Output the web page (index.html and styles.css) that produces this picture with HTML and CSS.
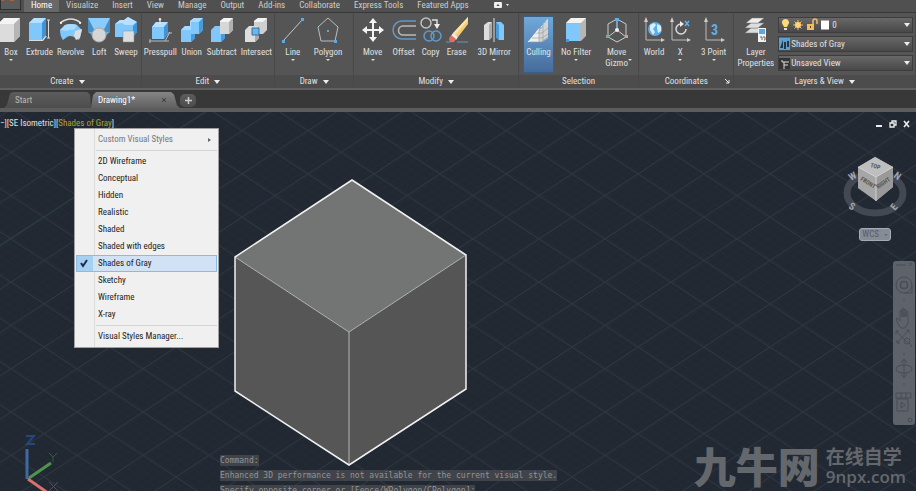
FILE: index.html
```html
<!DOCTYPE html>
<html lang="en">
  <head>
    <meta charset="UTF-8" />
    <meta name="viewport" content="width=device-width, initial-scale=1.0" />
    <title>Drawing1</title>
    <link rel="stylesheet" href="styles.css">
  </head>
  <body>
    <div class="app">
      <nav class="menu-tabs">
        <button class="app-button" aria-label="Application menu">
          <svg width="20" height="9" viewBox="0 0 20 9"><path d="M0 0h3v1H0zM9 0h4v1H9z" fill="#b0603c"/></svg>
        </button>
        <button class="menu-tab current">Home</button>
        <button class="menu-tab">Visualize</button>
        <button class="menu-tab">Insert</button>
        <button class="menu-tab">View</button>
        <button class="menu-tab">Manage</button>
        <button class="menu-tab">Output</button>
        <button class="menu-tab">Add-ins</button>
        <button class="menu-tab">Collaborate</button>
        <button class="menu-tab">Express Tools</button>
        <button class="menu-tab">Featured Apps</button>
        <button class="menu-tab ribbon-toggle" aria-label="Minimize ribbon">
          <svg width="18" height="8" viewBox="0 0 18 8"><rect x="1" y="1" width="8" height="6" rx="1" fill="#eee"/><path d="M3.500 5l1.500-2 1.500 2z" fill="#444"/><path d="M13 3h3l-1.500 2z" fill="#eee"/></svg>
        </button>
      </nav>

      <div class="ribbon">
        <section class="panel create">
          <div class="tools">
            <button class="tool">
              <svg width="22" height="26" viewBox="0 0 22 26"><path d="M-2 7l6-6h16v18l-6 6H-2z" fill="#dcdcdc"/><path d="M-2 7l6-6h16l-6 6z" fill="#f4f4f4"/><path d="M14 7l6-6v18l-6 6z" fill="#b5b5b5"/></svg>
              <span>Box</span><i class="caret"></i>
            </button>
            <button class="tool">
              <svg width="22" height="26" viewBox="0 0 22 26"><path d="M1 20v4h14l4-5" fill="#ddd"/><path d="M1 6l5-5h12v17l-4 5H1z" fill="#80c7fb"/><path d="M1 6l5-5h12l-4 5z" fill="#b7e0ff"/><path d="M14 6l4-5v17l-4 5z" fill="#3d95d8"/><path d="M20.500 3v18M19 3h3M19 21h3" stroke="#ddd"/></svg>
              <span>Extrude</span>
            </button>
            <button class="tool">
              <svg width="24" height="26" viewBox="0 0 24 26"><path d="M1 6Q12-2 22 6" fill="none" stroke="#ddd" stroke-width="1.500"/><path d="M1 13l5-5q6-2 12 0l5 5-3 10-5-3q-4-2-7 0l-4 3q-3-4-3-10z" fill="#80c7fb"/><path d="M1 13l5-5q6-2 12 0l-3 5q-4-1-7 1z" fill="#a9daff"/><path d="M16 14l7-2-2 9-4 2-2-4z" fill="#ddd"/><circle cx="2" cy="6" r="1" fill="#fff"/><circle cx="21" cy="6" r="1" fill="#fff"/></svg>
              <span>Revolve</span>
            </button>
            <button class="tool">
              <svg width="22" height="26" viewBox="0 0 22 26"><path d="M0 1h22v14l-7 6H8l-8-6z" fill="#64afe5"/><path d="M0 1h22l-6 11H6z" fill="#8dccfa"/><path d="M0 1l7 14-7 0zM22 1l-7 14h7z" fill="#488fc5"/><circle cx="11" cy="18" r="7" fill="#d5d5d5" stroke="#aaa"/></svg>
              <span>Loft</span>
            </button>
            <button class="tool">
              <svg width="22" height="26" viewBox="0 0 22 26"><path d="M0 7l5-4h4l4-3 9 5v10l-4 5H0z" fill="#80c7fb"/><path d="M0 7l5-4h4l4-3 9 5-5 3h-7l-3-2z" fill="#b7e0ff"/><path d="M18 9l4-4v10l-4 5z" fill="#3d95d8"/><path d="M8 14h11v11H8z" fill="#ddd" stroke="#888" stroke-width=".5"/></svg>
              <span>Sweep</span>
            </button>
          </div>
          <h2>Create <i class="drop"></i></h2>
        </section>

        <section class="panel edit">
          <div class="tools">
            <button class="tool">
              <svg width="24" height="26" viewBox="0 0 24 26"><path d="M1 24h20M17 24l5-9M2 22v4M19 16h5" stroke="#bbb" fill="none"/><path d="M4 10l4-5h12v12l-4 5H4z" fill="#80c7fb"/><path d="M4 10l4-5h12l-4 5z" fill="#b7e0ff"/><path d="M16 10l4-5v12l-4 5z" fill="#3d95d8"/><path d="M12 7V2M11 3l1-2 1 2z" stroke="#eee" fill="#eee"/></svg>
              <span>Presspull</span>
            </button>
            <button class="tool">
              <svg width="22" height="26" viewBox="0 0 22 26"><path d="M0 13l4-4h5V4l4-3h9v12l-4 4h-4v4l-4 4H0z" fill="#80c7fb"/><path d="M0 13l4-4h5V4l4-3h9l-4 4H10v8z" fill="#a9daff"/><path d="M18 5l4-4v12l-4 4h-4v4l-4 4v-8h8z" fill="#469bdb"/></svg>
              <span>Union</span>
            </button>
            <button class="tool">
              <svg width="22" height="26" viewBox="0 0 22 26"><path d="M0 13l4-4h10v12l-4 4H0z" fill="#80c7fb"/><path d="M10 13l4-4v12l-4 4z" fill="#469bdb"/><path d="M9 4l4-3h9v12l-4 4H9z" fill="#d7d7d7"/><path d="M9 4l4-3h9l-4 4H9z" fill="#f3f3f3"/><path d="M18 5l4-4v12l-4 4z" fill="#b0b0b0"/></svg>
              <span>Subtract</span>
            </button>
            <button class="tool">
              <svg width="22" height="26" viewBox="0 0 22 26"><path d="M9 4l4-3h9v12l-4 4H9z" fill="#cfcfcf"/><path d="M9 4l4-3h9l-4 4H9z" fill="#f3f3f3"/><path d="M0 13l4-4h10v12l-4 4H0z" fill="#ddd"/><path d="M10 13l4-4v12l-4 4z" fill="#aaa"/><path d="M7 11h7v7H7z" fill="#65b7f2" stroke="#3c6f97"/></svg>
              <span>Intersect</span>
            </button>
          </div>
          <h2>Edit <i class="drop"></i></h2>
        </section>

        <section class="panel draw">
          <div class="tools">
            <button class="tool">
              <svg width="22" height="26" viewBox="0 0 22 26"><path d="M1 24L21 2" stroke="#c8c8c8"/><path d="M0 23h3v3H0zM19 1h3v3h-3z" fill="#5fa9e2"/></svg>
              <span>Line</span><i class="caret"></i>
            </button>
            <button class="tool">
              <svg width="24" height="26" viewBox="0 0 24 26"><path d="M12 1L22 10 19 24H5L2 10z" fill="none" stroke="#b9bec2"/><path d="M11 13h2v2h-2zM18 23h3v3h-3z" fill="#5fa9e2"/></svg>
              <span>Polygon</span><i class="caret"></i>
            </button>
          </div>
          <h2>Draw <i class="drop"></i></h2>
        </section>

        <section class="panel modify">
          <div class="tools">
            <button class="tool">
              <svg width="22" height="26" viewBox="0 0 22 26"><path d="M11 4v18M3 13h16" stroke="#f4f4f4" stroke-width="2"/><path d="M7 6l4-5 4 5zM7 20l4 5 4-5zM5 9l-5 4 5 4zM17 9l5 4-5 4z" fill="#f4f4f4"/></svg>
              <span>Move</span><i class="caret"></i>
            </button>
            <button class="tool">
              <svg width="24" height="26" viewBox="0 0 24 26"><path d="M24 4H10a9 9 0 000 18h14" fill="none" stroke="#6498c5" stroke-width="1.500"/><path d="M24 9H11a4 4 0 000 9h13" fill="none" stroke="#b9b9b9" stroke-width="1.500"/></svg>
              <span>Offset</span>
            </button>
            <button class="tool">
              <svg width="22" height="26" viewBox="0 0 22 26"><g fill="none" stroke-width="1.500"><circle cx="6" cy="6" r="5" stroke="#c0c0c0"/><circle cx="9" cy="19" r="5" stroke="#5b9bd0"/><circle cx="16" cy="19" r="5" stroke="#5b9bd0"/><path d="M12 3h5v5" stroke="#ddd"/></g><path d="M14 7h6l-3 5z" fill="#eee"/></svg>
              <span>Copy</span>
            </button>
            <button class="tool">
              <svg width="22" height="26" viewBox="0 0 22 26"><path d="M0 25h5M11 25h11" stroke="#6498c5"/><path d="M22 0v7L12 20l-5-3z" fill="#f4cc73"/><path d="M22 0v3L9 18l-2-2z" fill="#ffe5a3"/><path d="M7 16l5 4-2 3-5-4z" fill="#eee"/><path d="M5 18l5 4-2 3q-4 1-5-3z" fill="#e07067"/></svg>
              <span>Erase</span>
            </button>
            <button class="tool mirror">
              <svg width="22" height="26" viewBox="0 0 22 26"><path d="M1 8l4-3h4v15l-3 3H1z" fill="#ddd"/><path d="M6 8l3-3v15l-3 3z" fill="#aaa"/><path d="M13 5h5l3 3v15h-5l-3-3z" fill="#80c7fb"/><path d="M13 5l3 3v15l-3-3z" fill="#469bdb"/><path d="M11 1v24" stroke="#ddd"/></svg>
              <span>3D Mirror</span><i class="caret"></i>
            </button>
          </div>
          <h2>Modify <i class="drop"></i></h2>
        </section>

        <section class="panel selection">
          <div class="tools">
            <button class="tool pressed">
              <svg width="24" height="26" viewBox="0 0 24 26"><path d="M1 25L12 11v14z" fill="#eee"/><path d="M12 14l9-12v19l-6 4h-3z" fill="#d4d4d4"/><path d="M1 25h13l7-5M4 21h11l6-4M8 16h7l6-5M12 11v14M16 9v15" stroke="#999" stroke-width=".6" fill="none"/><path d="M1 25L21 2" stroke="#fff" stroke-dasharray="1 1"/></svg>
              <span>Culling</span>
            </button>
            <button class="tool">
              <svg width="22" height="26" viewBox="0 0 22 26"><path d="M1 6l5-5h15v18l-5 5H1z" fill="#b5b5b5"/><path d="M1 6l5-5h15l-5 5z" fill="#f2f2f2"/><path d="M1 7h14v17H1z" fill="#80c7fb"/><path d="M1 22h3v3H1z" fill="#3f96dc"/></svg>
              <span>No Filter</span><i class="caret"></i>
            </button>
            <button class="tool gizmo">
              <svg width="22" height="26" viewBox="0 0 22 26"><path d="M11 2l9 5v13l-9 5-9-5V7zM11 13V3M11 13l9 7M11 13l-9 7" fill="none" stroke="#ccc"/><path d="M11 2v10" stroke="#62aee8"/><path d="M9 1h4v3H9z" fill="#62aee8"/><path d="M0 18h3v3H0z" fill="#6fb48d"/><path d="M19 18h3v3h-3z" fill="#e49b68"/><circle cx="11" cy="13" r="2" fill="#eee"/></svg>
              <span>Move<br>Gizmo</span><i class="caret side"></i>
            </button>
          </div>
          <h2>Selection</h2>
        </section>

        <section class="panel coordinates">
          <div class="tools">
            <button class="tool">
              <svg width="22" height="26" viewBox="0 0 22 26"><path d="M3 2v21h16" fill="none" stroke="#bbb"/><path d="M1 5l2-5 2 5zM18 21l4 2-4 2z" fill="#ccc"/><circle cx="12" cy="12" r="7" fill="#5aaeea"/><path d="M7 8l4-2 2 2-3 4 2 3-2 3-3-5zM14 7l4 2v5l-3 2-1-5z" fill="#d6edfc"/></svg>
              <span>World</span>
            </button>
            <button class="tool">
              <svg width="22" height="26" viewBox="0 0 22 26"><path d="M3 2v21h16" fill="none" stroke="#bbb"/><path d="M1 5l2-5 2 5zM18 21l4 2-4 2z" fill="#ccc"/><path d="M12 7a5 5 0 105 5" fill="none" stroke="#ddd" stroke-width="1.500"/><path d="M11 4l4 3-4 3z" fill="#eee"/><path d="M16 4l4 5M20 4l-4 5" stroke="#62aee8" stroke-width="1.500"/></svg>
              <span>X</span><i class="caret"></i>
            </button>
            <button class="tool three-point">
              <svg width="22" height="26" viewBox="0 0 22 26"><path d="M3 2v21h16" fill="none" stroke="#bbb"/><path d="M1 5l2-5 2 5zM18 21l4 2-4 2z" fill="#ccc"/><text x="8" y="18" class="icon-digit">3</text></svg>
              <span>3 Point</span><i class="caret"></i>
            </button>
          </div>
          <h2>Coordinates <svg class="launcher" width="5" height="5" viewBox="0 0 5 5"><path d="M0 0l4 4M4 1v3H1" stroke="#eee" fill="none"/></svg></h2>
        </section>

        <section class="panel layers">
          <div class="tools">
            <button class="tool">
              <svg width="22" height="26" viewBox="0 0 22 26"><g stroke="#777" stroke-width=".5" fill="#ddd"><path d="M0 16l6-5h13l-6 5z"/><path d="M0 11l6-5h13l-6 5z"/><path d="M1 6l6-5h12l-6 5z" fill="#eee"/></g><path d="M13 11h8v14h-8z" fill="#f2f2f2"/><path d="M14 12h6v5h-6z" fill="#58a9e4"/><path d="M15 20h2v3M18 20h2v3h-1" stroke="#666" fill="none"/></svg>
              <span>Layer<br>Properties</span>
            </button>
            <div class="combos">
              <label class="combo">
                <svg width="48" height="14" viewBox="0 0 48 14"><path d="M4 1a3.500 3.500 0 00-2 6l1 2h3l1-2a3.500 3.500 0 00-3-6z" fill="#ffd978"/><path d="M3 10h3v2H3z" fill="#ddd"/><path d="M17 2v10M12 7h10M13.500 3.500l7 7M20.500 3.500l-7 7" stroke="#eeb95e"/><circle cx="17" cy="7" r="3" fill="#ffd37a"/><path d="M26 6h7v6h-7z" fill="#f2bd62"/><path d="M32 6V3a2 2 0 014 0v3" fill="none" stroke="#f2bd62" stroke-width="1.500"/><path d="M29 8h1v2h-1z" fill="#54411f"/><path d="M40 2.500h8v9h-8z" fill="#fff"/></svg>
                <select aria-label="Layer"><option>0</option></select><i class="drop"></i>
              </label>
              <label class="combo tight">
                <svg width="11" height="12" viewBox="0 0 11 12"><path d="M0 0h11v12H0z" fill="#5c9fd0"/><path d="M1 10l3-8v8zM5 11V4h2v7zM8 3h2v6H8z" fill="#233747"/></svg>
                <select aria-label="Visual style"><option>Shades of Gray</option></select><i class="drop"></i>
              </label>
              <label class="combo tight">
                <svg width="11" height="12" viewBox="0 0 11 12"><path d="M0 1h11v11H0z" fill="#343434"/><path d="M2 4h2v2M5 12V5h5M5 8h4" stroke="#ddd" fill="none"/></svg>
                <select aria-label="View"><option>Unsaved View</option></select><i class="drop"></i>
              </label>
            </div>
          </div>
          <h2>Layers &amp; View <i class="drop"></i></h2>
        </section>
      </div>

      <div class="file-tabs">
        <button class="file-tab start">Start</button>
        <button class="file-tab open">Drawing1* <svg width="6" height="6" viewBox="0 0 6 6"><path d="M1 1l4 4M5 1L1 5" stroke="#3c3c3c"/></svg></button>
        <button class="file-tab new" aria-label="New drawing"><svg width="7" height="7" viewBox="0 0 7 7"><path d="M3.500 0v7M0 3.500h7" stroke="#ccc" stroke-width="1.500"/></svg></button>
      </div>

      <main class="viewport">
        <svg class="scene" width="100%" height="100%">
          <defs>
            <pattern id="minor" width="13.200" height="8.660" patternUnits="userSpaceOnUse" x="22" y="19">
              <path d="M0 0L13.200 8.660M13.200 0L0 8.660" stroke="#252d37" stroke-width=".5"/>
            </pattern>
            <pattern id="major" width="66" height="43.300" patternUnits="userSpaceOnUse" x="11" y="-3">
              <path d="M0 0L66 43.300M66 0L0 43.300" stroke="#303841" stroke-width="1"/>
            </pattern>
          </defs>
          <rect width="100%" height="100%" fill="url(#minor)"/>
          <rect width="100%" height="100%" fill="url(#major)"/>
          <path d="M0 133L206 0" stroke="#274632" stroke-width=".8"/>

          <!-- solid box -->
          <path d="M352 68L466 143 349 220 235 145z" fill="#727573"/>
          <path d="M235 145L349 220V353L235 279z" fill="#565656"/>
          <path d="M466 143L349 220V353L466 277z" fill="#555"/>
          <path d="M235 145L349 220 466 143M349 220V353" fill="none" stroke="#b4b4b4"/>
          <path d="M352 68L466 143V277L349 353 235 279V145z" fill="none" stroke="#f0f0f0" stroke-width="1.500"/>

          <!-- ucs icon -->
          <path d="M27 367V337" stroke="#4169a0" stroke-width="3"/>
          <path d="M29 366L51 351" stroke="#4e9350" stroke-width="3"/>
          <path d="M28 367L48 381" stroke="#d7716b" stroke-width="3"/>
          <path d="M26 324h8l-7 8h8" fill="none" stroke="#24477e" stroke-width="2"/>
          <path d="M49 341l4 4 4-4M53 345v5" fill="none" stroke="#315c39"/>
          <path d="M49 370l9 9M58 370l-9 9" stroke="#615047"/>
        </svg>

        <header class="view-bar">
          <div class="view-label">−][SE Isometric][<span>Shades of Gray</span>]</div>
          <div class="window-buttons">
            <button aria-label="Minimize"><svg width="8" height="8" viewBox="0 0 8 8"><path d="M1 6h6" stroke="#eee" stroke-width="2"/></svg></button>
            <button aria-label="Restore"><svg width="8" height="8" viewBox="0 0 8 8"><path d="M1 3h4v4H1zM3 3V1h4v4H5" fill="none" stroke="#eee" stroke-width="1.300"/></svg></button>
            <button aria-label="Close"><svg width="8" height="8" viewBox="0 0 8 8"><path d="M1 1l5 6M6 1L1 7" stroke="#eee" stroke-width="1.600"/></svg></button>
          </div>
        </header>

        <div class="style-menu" role="menu">
          <button role="menuitem" class="disabled">Custom Visual Styles <i class="arrow"></i></button>
          <hr>
          <button role="menuitem">2D Wireframe</button>
          <button role="menuitem">Conceptual</button>
          <button role="menuitem">Hidden</button>
          <button role="menuitem">Realistic</button>
          <button role="menuitem">Shaded</button>
          <button role="menuitem">Shaded with edges</button>
          <button role="menuitem" class="checked"><svg class="check" width="17" height="17" viewBox="0 0 17 17"><path d="M5 8l2 3 4-6" fill="none" stroke="#1c2c4c" stroke-width="2"/></svg>Shades of Gray</button>
          <button role="menuitem">Sketchy</button>
          <button role="menuitem">Wireframe</button>
          <button role="menuitem">X-ray</button>
          <hr>
          <button role="menuitem">Visual Styles Manager...</button>
        </div>

        <div class="view-cube">
          <svg width="66" height="66" viewBox="0 0 66 66">
            <ellipse cx="33" cy="40" rx="28" ry="20" fill="none" stroke="#434853" stroke-width="7"/>
            <path d="M33 4L51 14V34L34 48 16 35V14z" fill="#a6a6a6"/>
            <path d="M33 4L51 14 34 24 16 14z" fill="#bebebe"/>
            <path d="M51 14V34L34 48V24z" fill="#999"/>
            <path d="M16 14L34 24 51 14M34 24V48" fill="none" stroke="#d2d2d2"/>
            <g class="cube-text">
              <text transform="translate(28 14) rotate(14)">TOP</text>
              <text transform="translate(18 27) rotate(32)">FRONT</text>
              <text transform="translate(36 36) rotate(-34)">RIGHT</text>
            </g>
            <g class="compass-text">
              <text transform="translate(6 55) rotate(30)">S</text>
              <text transform="translate(53 58) rotate(-50)">E</text>
              <text transform="translate(9 28) rotate(-30)">W</text>
              <text transform="translate(51 24) rotate(35)">N</text>
            </g>
          </svg>
          <button class="wcs">WCS <i class="caret"></i></button>
        </div>

        <div class="nav-bar">
          <svg width="22" height="164" viewBox="0 0 22 164" fill="none" stroke="#464d57">
            <path d="M3 4h10M16 2l3 3M19 2l-3 3"/>
            <circle cx="11" cy="24" r="8"/><circle cx="11" cy="24" r="4"/><path d="M8 21h6v6H8zM11 32h8v-8"/>
            <path d="M10 39h2"/>
            <path d="M6 65l-3-7q1-2 3 1l1 1V50q1-2 2 0v6-8q1-2 2 0v8-7q1-2 2 0v7-5q2-2 2 0v11l-3 5H8z"/>
            <path d="M3 70l12 12M16 69L4 82M3 73v-3h3M13 69h3v3M4 79v3h3"/><circle cx="14" cy="80" r="3"/><path d="M16 82l3 4"/>
            <path d="M10 93h2"/>
            <ellipse cx="11" cy="108" rx="8" ry="4"/><path d="M11 99v17M8 102l3-4 3 4M8 113l3 4 3-4"/>
            <path d="M10 123h2M3 132h15v5H3zM8 132v5M13 132v5M4 138h11v12H4zM8 141l4 3-4 3z"/>
            <circle cx="17" cy="159" r="2"/>
          </svg>
        </div>

        <div class="command-history">
          <p><span>Command:</span></p>
          <p><span>Enhanced 3D performance is not available for the current visual style.</span></p>
          <p><span>Specify opposite corner or [Fence/WPolygon/CPolygon]:</span></p>
        </div>

        <div class="watermark" lang="zh">
          <strong>九牛网</strong>
          <div class="watermark-side"><span>在线自学</span><span class="domain">9npx.com</span></div>
        </div>
      </main>
    </div>
  </body>
</html>
```
FILE: styles.css
```css
* {
  box-sizing: border-box;
}
body {
  margin: 0;
  background-color: #212832;
  color: #e0e0e0;
  font-family: 'Roboto Condensed', Roboto, sans-serif;
  font-size: 9px;
  line-height: 11px;
}
button,
select {
  margin: 0;
  padding: 0;
  border: 0;
  background: none;
  color: inherit;
  font: inherit;
  white-space: nowrap;
}
svg {
  display: block;
  flex-shrink: 0;
}
.app {
  display: flex;
  flex-direction: column;
  height: 100vh;
  overflow: hidden;
}

/* menu tabs */
.menu-tabs {
  display: flex;
  flex-shrink: 0;
  height: 13px;
  background-color: #505050;
  border-bottom: 1px solid #383838;
}
.app-button {
  width: 21px;
  height: 10px;
  margin-right: 3px;
  background-color: #5c5c5c;
  border: 1px solid #303030;
  border-top: 0;
}
.menu-tab {
  display: flex;
  padding: 0 7px;
  color: #ccc;
}
.menu-tab.current {
  background-color: #686868;
  color: #fff;
}
.ribbon-toggle {
  margin-left: 10px;
  padding-top: 1px;
}

/* ribbon */
.ribbon {
  display: flex;
  flex-shrink: 0;
  height: 77px;
  background-color: #555;
  border-bottom: 2px solid #606060;
}
.panel {
  display: flex;
  flex-direction: column;
  min-width: 0;
  border-right: 1px solid #484848;
}
.create { flex: 142 1 0; }
.edit { flex: 133 1 0; }
.draw { flex: 79 1 0; }
.modify { flex: 165 1 0; }
.selection { flex: 120 1 0; }
.coordinates { flex: 95 1 0; }
.layers { flex: 182 1 0; }
.panel h2 {
  display: flex;
  justify-content: center;
  align-items: center;
  gap: 5px;
  height: 13px;
  margin: 0;
  background-color: #4c4c4c;
  font-size: 9px;
  font-weight: normal;
}
.create h2 {
  padding-right: 6px;
}
.tools {
  display: flex;
  flex: 1;
  justify-content: center;
  gap: 4px;
  padding-top: 4px;
}
.create .tools,
.selection .tools,
.coordinates .tools {
  justify-content: flex-start;
}
.draw .tools {
  gap: 10px;
  padding-right: 4px;
}
.selection .tools {
  gap: 8px;
  padding-left: 5px;
}
.coordinates .tools {
  padding-left: 4px;
}
.tool {
  position: relative;
  display: flex;
  flex-direction: column;
  align-items: center;
  align-self: flex-start;
  min-width: 22px;
}
.tool span {
  margin-top: 4px;
}
.modify .tool:first-child {
  margin-right: 4px;
}
.mirror,
.gizmo,
.three-point {
  margin-left: 6px;
}
.pressed {
  width: 29px;
  height: 55px;
  background: linear-gradient(#70a9d9, #456b9c);
  outline: 1px solid #3c5f87;
}
.caret {
  margin-top: 1px;
  border: 2px solid transparent;
  border-top-color: #ddd;
  border-bottom: 0;
}
.caret.side {
  position: absolute;
  right: -4px;
  bottom: 8px;
}
.drop {
  flex-shrink: 0;
  border: 3px solid transparent;
  border-top: 4px solid #eee;
  border-bottom: 0;
}
.icon-digit {
  fill: #62aee8;
  font-size: 14px;
  font-weight: bold;
}
.coordinates h2 {
  position: relative;
}
.launcher {
  position: absolute;
  right: 3px;
}
.combos {
  display: flex;
  flex: 1;
  flex-direction: column;
  gap: 3px;
}
.layers .tools {
  padding-left: 3px;
  padding-right: 2px;
}
.combo {
  display: flex;
  align-items: center;
  gap: 3px;
  height: 16px;
  padding: 0 2px;
  background: linear-gradient(#686868, #484848);
  border: 1px solid #3d3d3d;
}
.combo.tight {
  gap: 1px;
  padding-left: 0;
}
.combo select {
  flex: 1;
  min-width: 0;
  appearance: none;
}

/* file tabs */
.file-tabs {
  display: flex;
  flex-shrink: 0;
  align-items: flex-end;
  height: 22px;
  padding-left: 4px;
  background-color: #383838;
  border-bottom: 4px solid #5c5c5c;
}
.file-tab {
  display: flex;
  align-items: center;
  justify-content: space-between;
  height: 16px;
  background: linear-gradient(#5c5c5c, #4d4d4d);
  color: #bbb;
}
.file-tab.start {
  width: 87px;
  padding-left: 11px;
  clip-path: polygon(0 100%, 3px 80%, 6px 10%, 9px 0, 83px 0, 86px 15%, 100% 100%);
}
.file-tab.open {
  width: 89px;
  padding: 0 13px 0 7px;
  background: linear-gradient(#858585, #606060);
  color: #fff;
  clip-path: polygon(0 100%, 2px 20%, 5px 0, 80px 0, 83px 15%, 86px 85%, 100% 100%);
}
.file-tab.new {
  justify-content: center;
  width: 16px;
  height: 13px;
  margin-bottom: 1px;
  padding: 0;
  border-radius: 5px;
}

/* drawing area */
.viewport {
  position: relative;
  flex: 1;
  min-height: 0;
  overflow: hidden;
  background-color: #212832;
}
.scene {
  position: absolute;
  inset: 0;
}
.view-bar {
  position: relative;
  display: flex;
  justify-content: space-between;
  padding: 6px 5px 0 0;
}
.view-label span {
  color: #b3a52e;
}
.window-buttons {
  display: flex;
  gap: 6px;
  padding-top: 1px;
}

/* visual style menu */
.style-menu {
  position: absolute;
  left: 74px;
  top: 16px;
  width: 145px;
  padding: 2px 1px;
  background: linear-gradient(90deg, #f0f0f0 19px, #dcdcdc 19px, #dcdcdc 20px, #f0f0f0 20px);
  border: 1px solid #a0a0a0;
  color: #1c1c1c;
}
.style-menu button {
  display: flex;
  align-items: center;
  width: 100%;
  height: 17px;
  padding-left: 22px;
  text-align: left;
}
.style-menu hr {
  height: 1px;
  margin: 2px 0 2px 20px;
  border: 0;
  background-color: #d4d4d4;
}
.style-menu .disabled {
  justify-content: space-between;
  padding-right: 6px;
  color: #777;
}
.style-menu .checked {
  padding-left: 0;
  background-color: #d0e2f4;
  outline: 1px solid #8abbe4;
  outline-offset: -1px;
}
.check {
  margin-right: 5px;
  background-color: #a5d0f2;
}
.arrow {
  border: 2px solid transparent;
  border-left: 3px solid #666;
  border-right: 0;
}

/* navigation aids */
.view-cube {
  position: absolute;
  right: 8px;
  top: 41px;
  display: flex;
  flex-direction: column;
  align-items: center;
}
.cube-text {
  fill: #555;
  font-size: 6px;
  font-weight: bold;
}
.compass-text {
  fill: #a0a5ac;
  font-size: 10px;
  font-weight: bold;
}
.wcs {
  display: flex;
  align-items: center;
  justify-content: space-around;
  width: 32px;
  height: 13px;
  margin-top: 9px;
  background-color: #858c96;
  border: 1px solid #a4abb5;
  border-radius: 3px;
  color: #555d68;
}
.wcs .caret {
  margin: 0;
  border-top-color: #666d78;
}
.nav-bar {
  position: absolute;
  right: 1px;
  top: 149px;
  background-color: #5e636b;
  border-radius: 3px;
}

/* command line */
.command-history {
  position: absolute;
  left: 220px;
  bottom: -5px;
  font-family: 'DejaVu Sans Mono', monospace;
  font-size: 8px;
  color: #949494;
}
.command-history p {
  margin: 4px 0 0;
}
.command-history span {
  display: inline-block;
  background-color: #40444a;
}

.watermark {
  position: absolute;
  right: 10px;
  bottom: 4px;
  display: flex;
  align-items: center;
  gap: 6px;
  color: #64686d;
  font-family: 'Open Sans', 'Noto Sans CJK SC', sans-serif;
}
.watermark strong {
  font-size: 42px;
  font-weight: 900;
  line-height: 40px;
}
.watermark-side {
  display: flex;
  flex-direction: column;
  font-size: 19px;
  font-weight: 600;
  line-height: 20px;
}
.domain {
  font-size: 17px;
}
```
